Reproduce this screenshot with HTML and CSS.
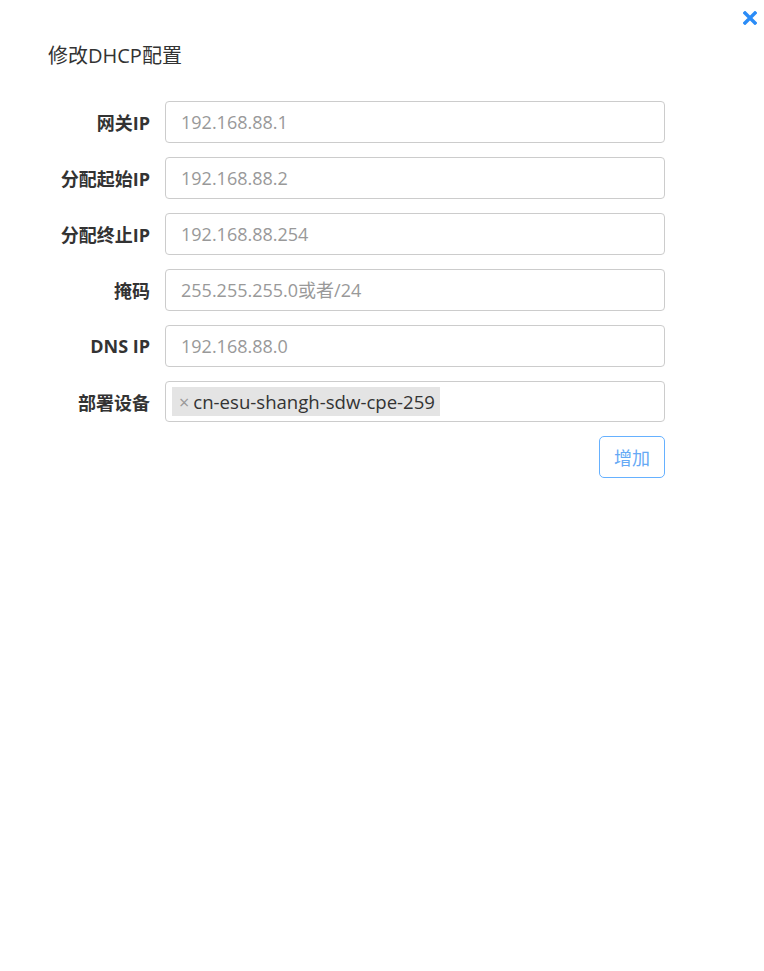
FILE: index.html
```html
<!DOCTYPE html>
<html lang="zh-CN">
<head>
    <meta charset="UTF-8">
    <title>修改DHCP配置</title>
    <link rel="stylesheet" href="styles.css">
</head>
<body>
    <div class="modal">
        <a class="close" href="#">
            <svg width="14" height="14" viewBox="0 0 14 14">
                <path d="M2 2 L12 12 M12 2 L2 12" stroke="#2b8cf7" stroke-width="3.4" stroke-linecap="square"/>
            </svg>
        </a>
        <h2 class="title">修改DHCP配置</h2>
        <form class="form">
            <div class="row">
                <label>网关IP</label>
                <input type="text" placeholder="192.168.88.1">
            </div>
            <div class="row">
                <label>分配起始IP</label>
                <input type="text" placeholder="192.168.88.2">
            </div>
            <div class="row">
                <label>分配终止IP</label>
                <input type="text" placeholder="192.168.88.254">
            </div>
            <div class="row">
                <label>掩码</label>
                <input type="text" placeholder="255.255.255.0或者/24">
            </div>
            <div class="row">
                <label>DNS IP</label>
                <input type="text" placeholder="192.168.88.0">
            </div>
            <div class="row">
                <label>部署设备</label>
                <div class="select">
                    <span class="tag"><span class="tag-x">×</span>cn-esu-shangh-sdw-cpe-259</span>
                </div>
            </div>
            <div class="actions">
                <button type="button" class="btn">增加</button>
            </div>
        </form>
    </div>
</body>
</html>
```

FILE: styles.css
```css
body {
    margin: 0;
    background-color: #fff;
    font-family: "Open Sans", "Noto Sans CJK SC", sans-serif;
    color: #333;
}
.modal {
    position: relative;
    width: 764px;
    height: 971px;
    box-sizing: border-box;
    padding: 40px 0 0 48px;
}
.close {
    position: absolute;
    top: 11px;
    right: 7px;
    display: block;
    line-height: 0;
}
.title {
    margin: 0;
    font-size: 20px;
    font-weight: normal;
    line-height: 32px;
    color: #333;
}
.form {
    margin-top: 29px;
    width: 617px;
}
.row {
    display: flex;
    align-items: center;
    gap: 15px;
    margin-bottom: 14px;
}
.row label {
    width: 102px;
    text-align: right;
    font-weight: bold;
    font-size: 18px;
    color: #333;
}
.row input, .select {
    width: 500px;
    height: 42px;
    box-sizing: border-box;
    border: 1px solid #ccc;
    border-radius: 4px;
    padding: 0 15px;
    font-family: inherit;
    font-size: 18px;
    color: #333;
    background: #fff;
}
.row input::placeholder {
    color: #999;
}
.select {
    display: flex;
    align-items: center;
    padding: 0 6px;
    height: 41px;
}
.tag {
    display: inline-flex;
    align-items: center;
    height: 29px;
    padding: 0 5px 0 7px;
    background-color: #e4e4e4;
    font-size: 18.6px;
    color: #333;
}
.tag-x {
    color: #999;
    font-size: 18px;
    margin-right: 4px;
}
.actions {
    display: flex;
    justify-content: flex-end;
}
.btn {
    height: 42px;
    padding: 0 14px;
    border: 1px solid #66b1ff;
    border-radius: 5px;
    background: #fff;
    color: #66a9f5;
    font-family: inherit;
    font-size: 18px;
    cursor: pointer;
}
```
